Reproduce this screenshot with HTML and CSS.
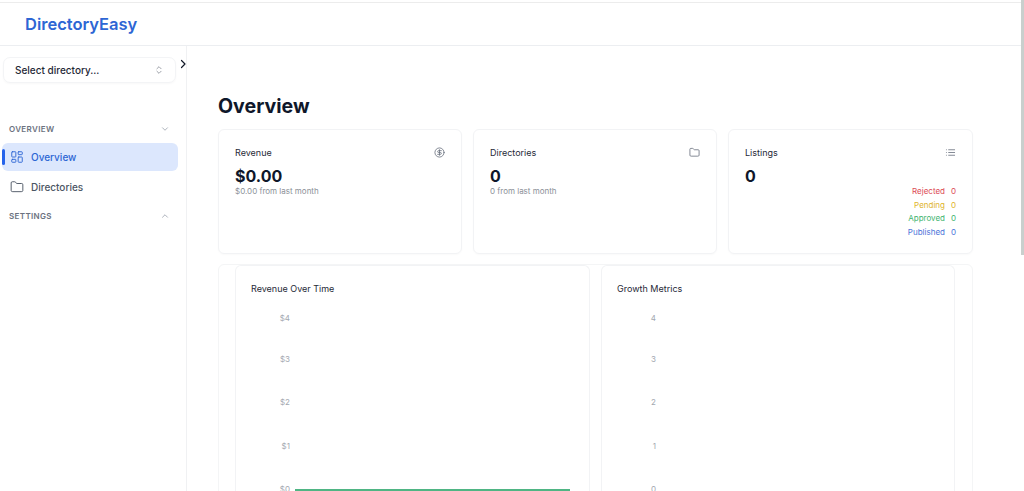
FILE: index.html
```html
<!DOCTYPE html>
<html lang="en">
<head>
<meta charset="utf-8">
<title>DirectoryEasy</title>
<link rel="stylesheet" href="styles.css">
</head>
<body>
<div class="app">
  <header class="topbar"><span class="logo">DirectoryEasy</span></header>
  <div class="body">
    <aside class="sidebar">
      <div class="select">
        <span>Select directory...</span>
        <svg class="i10" viewBox="0 0 24 24"><path d="m7 15 5 5 5-5M7 9l5-5 5 5"/></svg>
      </div>
      <svg class="toggle" viewBox="0 0 24 24"><path d="m9 5 7 7-7 7"/></svg>
      <div class="group first"><span>OVERVIEW</span><svg class="i10" viewBox="0 0 24 24"><path d="m6 9 6 6 6-6"/></svg></div>
      <div class="item active">
        <svg class="i14" viewBox="0 0 24 24"><rect x="3" y="3" width="7" height="9" rx="1"/><rect x="14" y="3" width="7" height="5" rx="1"/><rect x="14" y="12" width="7" height="9" rx="1"/><rect x="3" y="16" width="7" height="5" rx="1"/></svg>
        <span>Overview</span>
      </div>
      <div class="item">
        <svg class="i14" viewBox="0 0 24 24"><path d="M20 20a2 2 0 0 0 2-2V8a2 2 0 0 0-2-2h-7.9a2 2 0 0 1-1.7-.9l-.8-1.2A2 2 0 0 0 7.9 3H4a2 2 0 0 0-2 2v13a2 2 0 0 0 2 2Z"/></svg>
        <span>Directories</span>
      </div>
      <div class="group"><span>SETTINGS</span><svg class="i10" viewBox="0 0 24 24"><path d="m18 15-6-6-6 6"/></svg></div>
    </aside>
    <main class="main">
      <h1>Overview</h1>
      <section class="cards">
        <article class="card">
          <div class="card-head"><span>Revenue</span><svg class="i11" viewBox="0 0 24 24"><circle cx="12" cy="12" r="10"/><path d="M16 8h-6a2 2 0 1 0 0 4h4a2 2 0 1 1 0 4H8M12 18V6"/></svg></div>
          <div class="value">$0.00</div>
          <div class="sub">$0.00 from last month</div>
        </article>
        <article class="card">
          <div class="card-head"><span>Directories</span><svg class="i11" viewBox="0 0 24 24"><path d="M20 20a2 2 0 0 0 2-2V8a2 2 0 0 0-2-2h-7.9a2 2 0 0 1-1.7-.9l-.8-1.2A2 2 0 0 0 7.9 3H4a2 2 0 0 0-2 2v13a2 2 0 0 0 2 2Z"/></svg></div>
          <div class="value">0</div>
          <div class="sub">0 from last month</div>
        </article>
        <article class="card">
          <div class="card-head"><span>Listings</span><svg class="i11" viewBox="0 0 24 24"><path d="M8 6h13M8 12h13M8 18h13M3 6h.01M3 12h.01M3 18h.01"/></svg></div>
          <div class="value">0</div>
          <dl class="stats">
            <div class="rejected"><dt>Rejected</dt><dd>0</dd></div>
            <div class="pending"><dt>Pending</dt><dd>0</dd></div>
            <div class="approved"><dt>Approved</dt><dd>0</dd></div>
            <div class="published"><dt>Published</dt><dd>0</dd></div>
          </dl>
        </article>
      </section>
      <section class="panel">
        <article class="chart">
          <h2>Revenue Over Time</h2>
          <div class="plot">
            <div class="axis"><span>$4</span><span>$3</span><span>$2</span><span>$1</span><span>$0</span></div>
            <div class="bar"></div>
          </div>
        </article>
        <article class="chart">
          <h2>Growth Metrics</h2>
          <div class="plot">
            <div class="axis"><span>4</span><span>3</span><span>2</span><span>1</span><span>0</span></div>
          </div>
        </article>
      </section>
    </main>
  </div>
</div>
<div class="scrollbar"></div>
</body>
</html>
```

FILE: styles.css
```css
* { box-sizing: border-box; }
html, body { margin: 0; height: 491px; overflow: hidden; background: #fff; }
body { font-family: Inter, "Liberation Sans", sans-serif; color: #111827; }
svg { fill: none; stroke: currentColor; stroke-width: 2; stroke-linecap: round; stroke-linejoin: round; flex: none; display: block; }
.i10 { width: 10px; height: 10px; }
.i11 { width: 11px; height: 11px; color: #6b7280; stroke-width: 1.8; }
.i14 { width: 14px; height: 14px; stroke-width: 1.6; }

.app { height: 489px; margin-top: 2px; display: flex; flex-direction: column; border-top: 1px solid #ececec; }
.topbar { height: 43px; flex: none; border-bottom: 1px solid #eceef1; display: flex; align-items: center; padding-left: 25px; }
.logo { font-size: 16.5px; font-weight: 600; color: #2d66d4; }
.body { flex: 1; display: flex; min-height: 0; }

.sidebar { width: 187px; flex: none; border-right: 1px solid #f0f1f3; position: relative; padding: 11px 8px 0 2px; }
.select { height: 26px; width: 173px; margin-left: 1px; border: 1px solid #f3f4f6; border-radius: 7px; box-shadow: 0 1px 2px rgba(0,0,0,.03); display: flex; align-items: center; justify-content: space-between; padding: 0 11px 0 11px; font-size: 10px; font-weight: 500; color: #1f2937; }
.select svg { color: #8a8f98; }
.toggle { position: absolute; left: 177px; top: 12px; width: 12px; height: 12px; color: #111827; stroke-width: 2.4; }
.group { display: flex; align-items: center; justify-content: space-between; padding: 0 8px 0 7px; font-size: 8px; font-weight: 600; letter-spacing: .35px; color: #6b7280; height: 14px; margin-top: 8px; }
.group svg { color: #9ca3af; }
.group.first { margin-top: 39px; margin-bottom: 7px; }
.item { height: 28px; width: 176px; margin-bottom: 2px; display: flex; align-items: center; gap: 7px; padding-left: 8px; font-size: 10px; font-weight: 500; color: #4b5563; position: relative; border-radius: 6px; }
.item.active { background: #dce7fd; color: #2d66d4; }
.item.active::before { content: ""; position: absolute; left: 0; top: 6px; width: 2.5px; height: 16px; background: #2563eb; border-radius: 2px; }

.main { flex: 1; min-width: 0; padding: 48px 51px 0 31px; }
h1 { margin: 0 0 11px; font-size: 19.6px; line-height: 24px; font-weight: 700; color: #0f172a; height: 24px; }
.cards { display: grid; grid-template-columns: 244px 244px 245px; gap: 11px; }
.card { height: 125px; border: 1px solid #f2f3f5; border-radius: 6px; box-shadow: 0 1px 2px rgba(0,0,0,.025); padding: 15px 16px 16px; }
.card-head { display: flex; align-items: center; justify-content: space-between; font-size: 9px; font-weight: 400; color: #1f2937; height: 14px; }
.value { font-size: 16px; font-weight: 700; line-height: 18px; margin-top: 8px; color: #0f172a; }
.sub { font-size: 8px; line-height: 11px; margin-top: 1px; color: #8b9098; }
.stats { margin: 0; }
.stats div { display: flex; justify-content: flex-end; gap: 6px; font-size: 8px; line-height: 13.5px; }
.stats dt { margin: 0; }
.stats dd { margin: 0; width: 5px; text-align: right; }
.rejected { color: #dc4b55; }
.pending { color: #e0b42c; }
.approved { color: #3fb56f; }
.published { color: #4c74d9; }

.panel { margin-top: 10px; height: 241px; border: 1px solid #f4f5f6; border-radius: 6px; padding: 0 16px 0 16px; display: grid; grid-template-columns: 355px 354px; gap: 11px; }
.chart { border: 1px solid #f2f3f5; border-bottom: 0; border-radius: 6px 6px 0 0; padding: 16px 16px 0 15px; height: 241px; }
h2 { margin: 0; font-size: 9px; line-height: 14px; font-weight: 400; color: #1f2937; }
.plot { position: relative; }
.axis { position: absolute; top: 17px; width: 39px; display: grid; grid-template-rows: 41px 43px 44px 43px 10px; justify-items: end; font-size: 8px; line-height: 10px; color: #a3a8b0; }
.bar { position: absolute; left: 44px; top: 193px; width: 275px; height: 3px; background: #4fb584; }

.scrollbar { position: absolute; left: 1021px; top: 0; width: 3px; height: 255px; background: #c9cfcd; }
```
